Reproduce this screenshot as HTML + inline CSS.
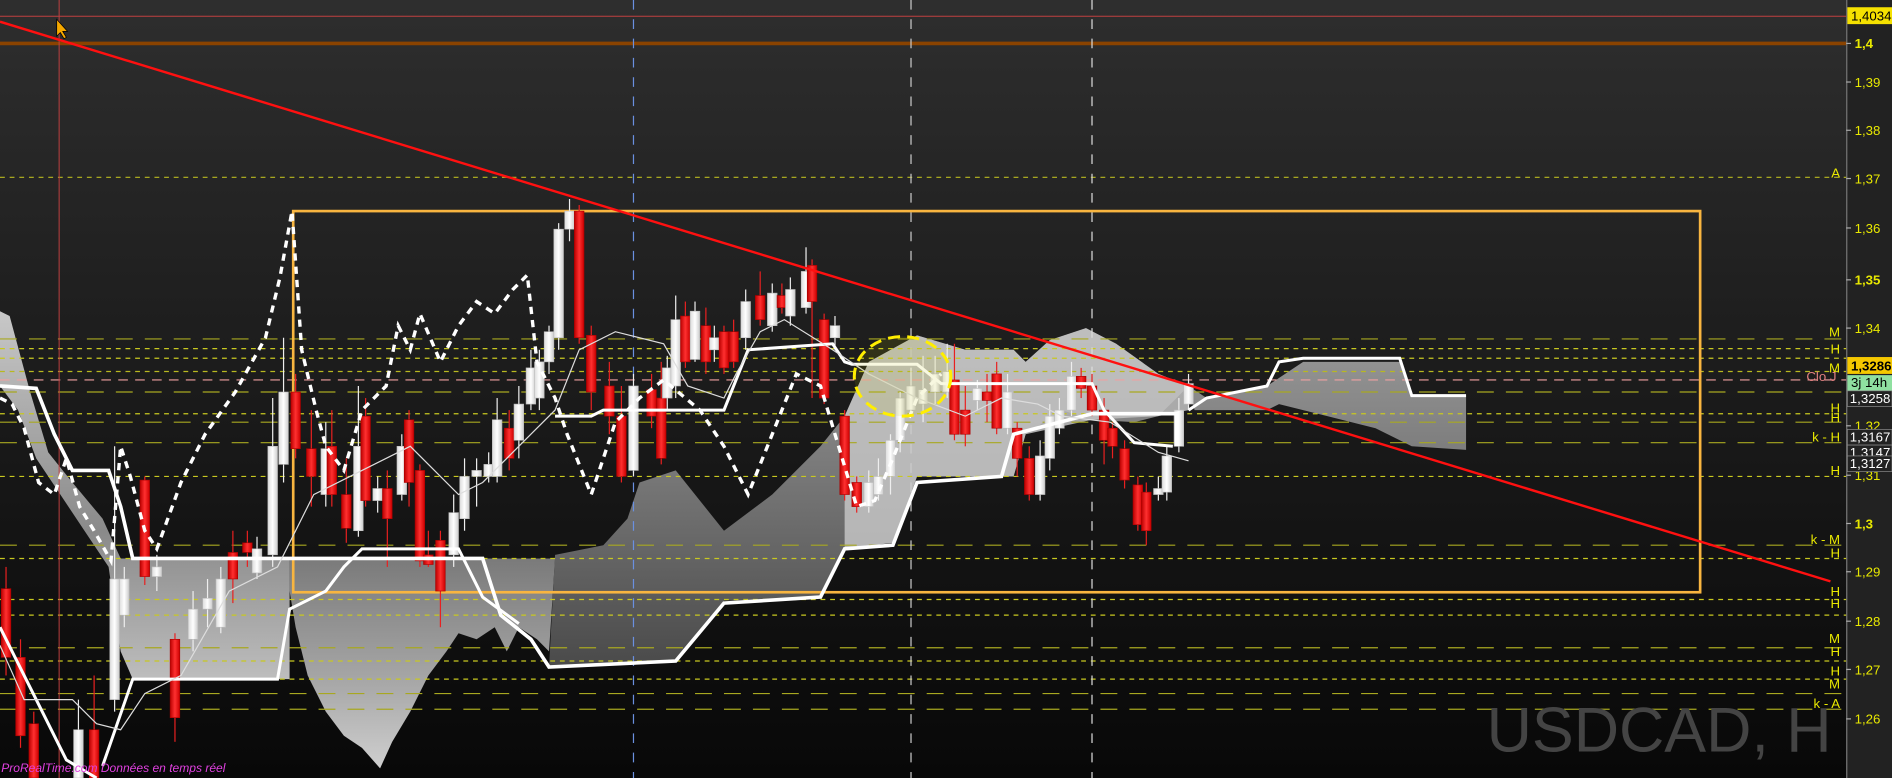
<!DOCTYPE html>
<html><head><meta charset="utf-8"><style>
html,body{margin:0;padding:0;background:#1a1a1a;overflow:hidden}
svg{display:block}
text{font-family:"Liberation Sans",sans-serif}
</style></head><body>
<svg id="s" width="1892" height="778" viewBox="0 0 1568 645" preserveAspectRatio="none" xmlns="http://www.w3.org/2000/svg">
<defs>
<linearGradient id="bg" x1="0" y1="0" x2="0" y2="1"><stop offset="0" stop-color="#2e2e2e"/><stop offset="1" stop-color="#080808"/></linearGradient>
<linearGradient id="cl" x1="0" y1="0" x2="0" y2="1"><stop offset="0" stop-color="#7a7a7a"/><stop offset="0.6" stop-color="#a8a8a8"/><stop offset="1" stop-color="#cfcfcf"/></linearGradient>
<linearGradient id="cl2" x1="0" y1="0" x2="0" y2="1"><stop offset="0" stop-color="#c8c8c8"/><stop offset="0.6" stop-color="#8a8a8a"/><stop offset="1" stop-color="#bdbdbd"/></linearGradient>
<linearGradient id="cl3" x1="0" y1="0" x2="0" y2="1"><stop offset="0" stop-color="#9a9a9a"/><stop offset="1" stop-color="#4a4a4a"/></linearGradient>
<linearGradient id="rc" x1="0" y1="0" x2="1" y2="0"><stop offset="0" stop-color="#b00"/><stop offset=".5" stop-color="#ff3030"/><stop offset="1" stop-color="#c00"/></linearGradient>
<linearGradient id="wc" x1="0" y1="0" x2="1" y2="0"><stop offset="0" stop-color="#ddd"/><stop offset=".5" stop-color="#fff"/><stop offset="1" stop-color="#ccc"/></linearGradient>
</defs>
<rect width="1568" height="645" fill="url(#bg)"/>
<rect x="1530" y="0" width="38" height="645" fill="#222"/>
<line x1="1530.5" y1="0" x2="1530.5" y2="645" stroke="#777"/>
<!-- clouds -->
<path fill="url(#cl2)" d="M0,258 L8,262 L25,325 L40,375 L60,400 L85,430 L100,463 L240,463 L240,563 L110,563 L100,540 L90,470 L70,440 L50,410 L30,380 L15,340 L0,320Z"/>
<path fill="url(#cl)" d="M240,463 L460,463 L455,540 L445,530 L430,520 L420,540 L410,520 L395,530 L380,525 L370,540 L355,560 L340,590 L325,615 L315,637 L300,620 L285,610 L270,590 L255,560 L245,520 L240,490Z"/>
<path fill="url(#cl3)" d="M460,460 L500,452 L520,430 L530,400 L560,390 L600,440 L640,410 L680,370 L700,345 L720,300 L760,278 L800,290 L840,290 L850,300 L870,282 L900,272 L925,285 L960,310 L985,320 L1000,330 L1050,320 L1080,300 L1160,300 L1170,328 L1215,328 L1215,373 L1170,370 L1140,355 L1100,345 L1060,335 L1050,340 L990,340 L985,320 L960,345 L940,350 L905,348 L880,340 L850,360 L840,395 L760,395 L740,450 L700,455 L680,495 L600,498 L560,548 L455,553 Z"/>
<path fill="#c4c4c4" opacity=".85" d="M700,345 L720,300 L760,278 L800,290 L840,290 L850,300 L870,282 L900,272 L925,285 L960,310 L985,320 L985,340 L960,345 L905,348 L850,360 L840,395 L760,395 L740,450 L700,455Z"/>
<!-- horizontal lines -->
<line x1="0" y1="13.5" x2="1530" y2="13.5" stroke="#c04040" stroke-width="0.8"/>
<line x1="0" y1="36" x2="1530" y2="36" stroke="#8a4300" stroke-width="3"/>
<g id="hl" stroke-width="1"></g>
<line x1="0" y1="315" x2="1530" y2="315" stroke="#f0a0a0" stroke-dasharray="8 6" stroke-width="1"/>
<!-- verticals -->
<line x1="49" y1="0" x2="49" y2="645" stroke="#c04040" stroke-width="0.8"/>
<line x1="525" y1="0" x2="525" y2="645" stroke="#6a90e0" stroke-dasharray="8 8"/>
<line x1="755" y1="0" x2="755" y2="645" stroke="#ccc" stroke-dasharray="8 8"/>
<line x1="905" y1="0" x2="905" y2="645" stroke="#ddd" stroke-dasharray="8 8"/>
<!-- orange box -->
<rect x="243" y="175" width="1166" height="316" fill="none" stroke="#f8b540" stroke-width="2.2"/>
<g id="cd"></g>
<!-- thick lines -->
<polyline fill="none" stroke="#fff" stroke-width="3" points="0,320 30,322 45,360 60,390 90,390 100,420 110,463 400,463 415,510 440,530 455,553 560,548 600,500 680,495 700,455 740,452 760,400 830,395 840,360 905,343 975,343 975,370"/>
<polyline fill="none" stroke="#fff" stroke-width="2.5" points="0,520 15,550 30,580 55,630 80,645"/>
<polyline fill="none" stroke="#fff" stroke-width="2.5" points="85,635 110,563 230,563 240,505 270,490 285,470 300,455 370,455 380,455 400,495 430,517"/>
<polyline fill="none" stroke="#fff" stroke-width="2.5" points="460,345 490,345 500,340 600,340 620,290 690,285 700,300 706,302 760,302 780,318 840,318 880,318 905,318 915,340 940,367 972,370"/>
<polyline fill="none" stroke="#fff" stroke-width="2.5" points="985,340 1000,330 1050,320 1060,300 1080,297 1160,297 1170,328 1215,328"/>
<!-- thin line -->
<polyline fill="none" stroke="#ddd" stroke-width="1" points="0,535 20,580 60,580 80,600 100,605 120,575 150,560 190,490 230,470 260,410 300,390 340,370 380,410 400,400 440,360 460,340 480,290 510,275 550,285 570,320 600,330 610,310 630,275 650,265 690,290 720,310 760,330 800,345 830,330 860,335 880,345 920,350 960,375 985,382"/>
<!-- chikou dashed -->
<polyline fill="none" stroke="#fff" stroke-width="2.8" stroke-dasharray="6 5" points="0,330 10,335 20,355 32,400 45,410 55,380 66,420 78,440 92,465 100,370 108,395 120,440 130,455 150,400 170,360 195,325 220,280 232,230 242,175 250,290 262,340 270,370 285,390 300,340 320,320 330,270 340,290 348,260 365,300 380,270 395,250 410,260 425,240 437,228 445,300 460,330 470,360 490,410 510,350 530,330 550,315 580,340 600,370 620,410 640,360 660,310 680,320 695,370 710,420 725,415 740,380 760,330 780,310"/>
<!-- trendline -->
<line x1="0" y1="18" x2="1517" y2="482" stroke="#ff1010" stroke-width="2"/>
<!-- ellipse -->
<ellipse cx="748" cy="312" rx="40" ry="33" fill="rgba(200,200,0,0.12)" stroke="#ffee00" stroke-width="2.5" stroke-dasharray="10 6"/>
<!-- cursor -->
<path d="M47,16 L47,30 L50,27 L53,32 L55,31 L52,26 L56,26Z" fill="#f5a800" stroke="#000" stroke-width="0.6"/>
<g id="lbl" font-size="11" fill="#e8e800"></g>
<!-- price boxes -->
<rect x="1531" y="6" width="37" height="14" fill="#f5e100"/><text x="1534" y="17" font-size="11" fill="#000">1,4034</text>
<rect x="1531" y="296" width="37" height="14" fill="#f5c800"/><text x="1534" y="307" font-size="11" font-weight="bold" fill="#000">1,3286</text>
<rect x="1531" y="311" width="37" height="13" fill="#8fe0a0"/><text x="1534" y="321" font-size="11" fill="#000">3j 14h</text>
<rect x="1531" y="324" width="37" height="13" fill="#222" stroke="#888" stroke-width=".6"/><text x="1533" y="334" font-size="11" fill="#fff">1,3258</text>
<rect x="1531" y="356" width="37" height="13" fill="#222" stroke="#888" stroke-width=".6"/><text x="1533" y="366" font-size="11" fill="#fff">1,3167</text>
<rect x="1531" y="369" width="37" height="13" fill="#222" stroke="#888" stroke-width=".6"/><text x="1533" y="379" font-size="11" fill="#fff">1,3147</text>
<rect x="1531" y="378" width="37" height="13" fill="#222" stroke="#888" stroke-width=".6"/><text x="1533" y="388" font-size="11" fill="#fff">1,3127</text>
<text x="1497" y="316" font-size="11" fill="#e08080">Clo J</text>
<text x="1232" y="623" font-size="52" fill="#444">USDCAD, H</text>
<text x="1" y="640" font-size="10" fill="#e040e0" font-style="italic">ProRealTime.com  Données en temps réel</text>
</svg>
<script>
var NS="http://www.w3.org/2000/svg";
function el(p,t,a,tx){var e=document.createElementNS(NS,t);for(var k in a)e.setAttribute(k,a[k]);if(tx)e.textContent=tx;document.getElementById(p).appendChild(e);}
var lv=[[147,"#b8b820","4 4"],[281,"#a8a820","14 10"],[289,"#c8c820","4 4"],[297,"#c8c820","4 4"],[308,"#b8b820","4 4"],[325,"#a8a820","14 10"],[343,"#c8c820","4 4"],[350,"#a8a820","14 10"],[367,"#a8a820","14 10"],[395,"#c8c820","4 4"],[452,"#a8a820","14 10"],[463,"#c8c820","4 4"],[497,"#c8c820","4 4"],[510,"#c8c820","4 4"],[537,"#a8a820","14 10"],[548,"#c8c820","4 4"],[563,"#c8c820","4 4"],[575,"#a8a820","14 10"],[588,"#a8a820","14 10"]];
lv.forEach(function(l){el("hl","line",{x1:0,x2:1530,y1:l[0],y2:l[0],stroke:l[1],"stroke-dasharray":l[2]});});
var ax=[[36,"1,4",1],[68,"1,39"],[108,"1,38"],[148,"1,37"],[189,"1,36"],[232,"1,35",1],[272,"1,34"],[353,"1,32"],[394,"1,31"],[434,"1,3",1],[474,"1,29"],[515,"1,28"],[555,"1,27"],[596,"1,26"]];
ax.forEach(function(a){el("lbl","line",{x1:1530,x2:1534,y1:a[0],y2:a[0],stroke:"#aaa"});el("lbl","text",{x:1537,y:a[0]+4,"font-weight":a[2]?"bold":"normal"},a[1]);});
var ml=[[143,"A"],[275,"M"],[289,"H"],[305,"M"],[338,"H"],[346,"H"],[362,"k - H"],[390,"H"],[447,"k - M"],[458,"H"],[490,"H"],[500,"H"],[529,"M"],[540,"H"],[556,"H"],[567,"M"],[583,"k - A"]];
ml.forEach(function(m){el("lbl","text",{x:1525,y:m[0]+4,"text-anchor":"end"},m[1]);});
var C=[[5,488,545,470,560,0],[17,545,610,530,620,0],[28,600,645,590,645,0],[65,605,645,580,645,1],[78,605,645,560,645,0],[95,480,580,370,590,1],[103,480,510,470,520,1],[120,398,478,395,485,0],[130,470,478,460,490,1],[145,530,595,525,615,0],[160,505,530,490,540,1],[172,496,505,480,520,1],[183,480,520,470,525,1],[193,458,480,440,500,0],[205,450,458,440,470,0],[213,455,475,445,480,1],[226,370,460,330,470,1],[235,325,385,280,400,1],[245,325,372,310,380,0],[258,372,395,340,420,0],[270,372,410,350,420,1],[275,370,410,340,420,0],[287,410,438,380,450,0],[297,370,440,320,445,1],[303,345,415,330,420,0],[313,405,415,395,425,1],[321,405,430,390,470,0],[333,370,410,360,415,1],[339,348,400,340,420,0],[348,390,465,385,470,0],[355,460,468,440,470,0],[365,448,490,440,520,0],[376,425,460,410,470,1],[385,395,430,380,440,1],[395,390,395,380,420,1],[405,385,395,375,400,1],[412,348,395,330,400,1],[422,355,380,340,390,0],[430,335,365,320,380,1],[440,305,335,290,340,1],[447,300,330,290,340,1],[455,275,300,270,310,1],[463,190,280,185,290,1],[472,175,190,165,200,1],[480,175,280,170,285,0],[490,278,325,270,340,0],[505,320,345,300,360,0],[515,345,395,320,400,0],[525,320,390,310,395,1],[540,323,345,310,355,0],[548,330,380,300,385,0],[553,305,330,295,340,1],[560,265,320,245,330,1],[568,262,300,250,305,0],[576,258,298,250,300,1],[585,270,300,255,310,0],[592,280,290,270,300,1],[600,275,305,270,310,0],[608,275,300,265,305,0],[618,250,280,240,290,1],[630,245,265,225,270,0],[640,243,270,235,275,1],[648,245,255,235,260,0],[655,240,262,230,270,1],[668,225,255,205,260,1],[673,220,250,215,330,0],[683,265,330,260,335,0],[692,270,280,262,290,1],[700,345,410,340,415,0],[710,400,420,395,425,0],[720,400,420,390,425,1],[728,395,410,380,415,1],[738,365,395,360,410,1],[746,330,365,325,375,1],[755,320,340,305,345,1],[765,323,335,295,350,1],[775,310,325,295,335,1],[785,308,325,285,330,1],[791,315,360,285,365,0],[800,340,360,320,370,0],[810,322,332,315,340,1],[818,325,332,310,350,0],[826,310,355,300,360,0],[835,325,355,310,360,1],[843,355,380,350,395,0],[853,380,410,370,415,0],[862,378,410,365,415,1],[870,345,380,335,390,1],[878,340,355,330,360,1],[888,312,340,300,345,1],[896,312,322,305,330,0],[905,320,340,310,345,0],[915,340,365,330,385,0],[922,355,370,350,380,0],[932,372,398,365,405,0],[943,402,435,395,440,0],[950,408,440,400,452,0],[960,405,410,395,415,1],[967,378,408,370,415,1],[977,340,370,330,375,1],[985,318,335,310,340,1]];
C.forEach(function(c){var col=c[5]?"#eee":"#e82020";el("cd","line",{x1:c[0],x2:c[0],y1:c[3],y2:c[4],stroke:col,"stroke-width":1});el("cd","rect",{x:c[0]-4,y:c[1],width:8,height:Math.max(2,c[2]-c[1]),fill:c[5]?"url(#wc)":"url(#rc)",stroke:c[5]?"#bbb":"#a00","stroke-width":.5});});
</script>
</body></html>
